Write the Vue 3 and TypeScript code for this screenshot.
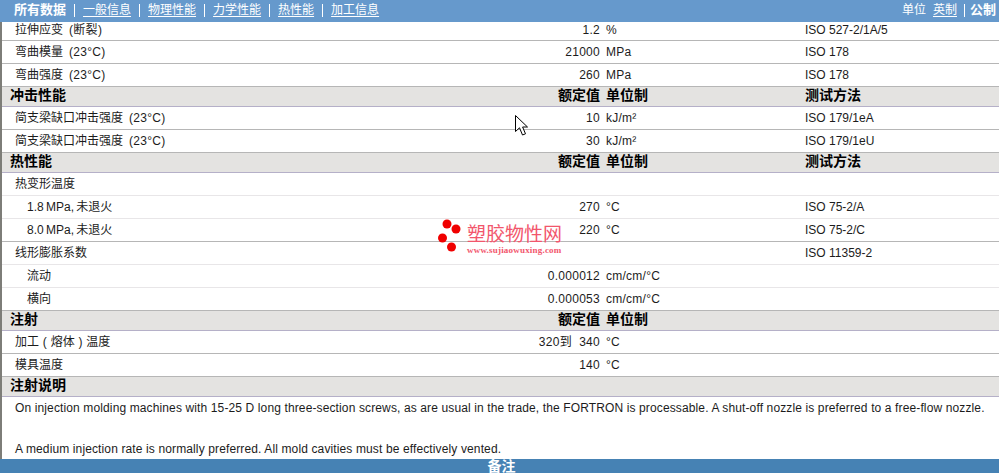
<script setup lang="ts">
interface Row {
  kind: 'head' | 'row' | 'sub' | 'first'
  label: string
  note?: string
  value?: string
  unit?: string
  method?: string
  last?: boolean
  wide?: boolean
}

const links: string[] = ['一般信息', '物理性能', '力学性能', '热性能', '加工信息']

const rows: Row[] = [
  { kind: 'first', label: '拉伸应变', note: '(断裂)', value: '1.2', unit: '%', method: 'ISO 527-2/1A/5' },
  { kind: 'row', label: '弯曲模量', note: '(23°C)', value: '21000', unit: 'MPa', method: 'ISO 178' },
  { kind: 'row', label: '弯曲强度', note: '(23°C)', value: '260', unit: 'MPa', method: 'ISO 178' },
  { kind: 'head', label: '冲击性能', value: '额定值', unit: '单位制', method: '测试方法' },
  { kind: 'row', label: '简支梁缺口冲击强度', note: '(23°C)', value: '10', unit: 'kJ/m²', method: 'ISO 179/1eA' },
  { kind: 'row', label: '简支梁缺口冲击强度', note: '(23°C)', value: '30', unit: 'kJ/m²', method: 'ISO 179/1eU' },
  { kind: 'head', label: '热性能', value: '额定值', unit: '单位制', method: '测试方法' },
  { kind: 'row', label: '热变形温度', last: false },
  { kind: 'sub', label: '1.8 MPa, 未退火', value: '270', unit: '°C', method: 'ISO 75-2/A' },
  { kind: 'sub', label: '8.0 MPa, 未退火', value: '220', unit: '°C', method: 'ISO 75-2/C', last: true },
  { kind: 'row', label: '线形膨胀系数', method: 'ISO 11359-2', last: false },
  { kind: 'sub', label: '流动', value: '0.000012', unit: 'cm/cm/°C' },
  { kind: 'sub', label: '横向', value: '0.000053', unit: 'cm/cm/°C', last: true },
  { kind: 'head', label: '注射', value: '额定值', unit: '单位制' },
  { kind: 'row', label: '加工 ( 熔体 ) 温度', value: '320到  340', unit: '°C', wide: true },
  { kind: 'row', label: '模具温度', value: '140', unit: '°C' },
  { kind: 'head', label: '注射说明' }
]

function rowClass(r: Row): Record<string, boolean> {
  const lightBorder = (r.label === '热变形温度' || r.label === '线形膨胀系数' || r.kind === 'sub') && !r.last
  return {
    head: r.kind === 'head',
    sub: r.kind === 'sub',
    first: r.kind === 'first',
    light: lightBorder,
    wide: !!r.wide
  }
}
</script>

<template>
  <div class="page">
    <header class="topbar">
      <nav class="nav">
        <strong class="current">所有数据</strong>
        <template v-for="link in links" :key="link">
          <span class="sep"></span>
          <a class="link">{{ link }}</a>
        </template>
      </nav>
      <div class="units">
        <span>单位</span>
        <a class="link">英制</a>
        <span class="sep small"></span>
        <strong class="current">公制</strong>
      </div>
    </header>

    <main class="content">
      <div v-for="(r, i) in rows" :key="i" class="row" :class="rowClass(r)">
        <div class="label">{{ r.label }}<span v-if="r.note" class="note">{{ r.note }}</span></div>
        <div class="value">{{ r.value }}</div>
        <div class="unit">{{ r.unit }}</div>
        <div class="method">{{ r.method }}</div>
      </div>
      <section class="notes">
        <p>On injection molding machines with 15-25 D long three-section screws, as are usual in the trade, the FORTRON is processable. A shut-off nozzle is preferred to a free-flow nozzle.</p>
        <p>A medium injection rate is normally preferred. All mold cavities must be effectively vented.</p>
      </section>
    </main>

    <footer class="footer">备注</footer>

    <div class="watermark">
      <svg class="dots" width="26" height="36" viewBox="0 0 26 36">
        <circle cx="9" cy="5" r="4.5" fill="#f00000" />
        <circle cx="18" cy="10" r="4.5" fill="#f00000" />
        <circle cx="4.5" cy="19" r="4.5" fill="#f00000" />
        <circle cx="13.5" cy="28" r="4.5" fill="#f00000" />
      </svg>
      <div class="brand">
        <div class="brand-name">塑胶物性网</div>
        <div class="brand-url">www.sujiaowuxing.com</div>
      </div>
    </div>

    <svg class="cursor" width="14" height="22" viewBox="0 0 14 22">
      <path d="M0.5 0.5 V16.5 L4.5 12.8 L7.5 20 L10.5 18.8 L7.6 12 H12.5 Z" fill="#fff" stroke="#000" stroke-width="1" stroke-linejoin="miter" />
    </svg>
  </div>
</template>

<style>
html, body { margin: 0; padding: 0; background: #fff; overflow: hidden; }
</style>

<style scoped>
.page {
  position: relative;
  width: 999px;
  height: 473px;
  overflow: hidden;
  display: flex;
  flex-direction: column;
  background: #fff;
  color: #1c1c1c;
  font: 12px/16px "Liberation Sans", "Noto Sans CJK SC", sans-serif;
}
.topbar {
  height: 22px;
  flex: none;
  background: #6699cc;
  color: #fff;
  display: flex;
  justify-content: space-between;
  align-items: center;
  padding: 0 3px 2px 14px;
  box-sizing: border-box;
}
.nav, .units { display: flex; align-items: center; }
.nav { gap: 8px; }
.units { gap: 7px; }
.current { font-size: 13px; font-weight: 700; }
.link { text-decoration: underline; text-underline-offset: 2px; }
.sep {
  width: 1px;
  height: 13px;
  background: #fff;
}
.units .sep.small { margin-right: -2px; }
.content {
  flex: 1;
  min-height: 0;
  border-left: 2px solid #7d7d78;
  display: flex;
  flex-direction: column;
}
.row {
  flex: none;
  height: 23px;
  box-sizing: border-box;
  display: grid;
  grid-template-columns: 398px 200px 205px 1fr;
  align-items: center;
  border-bottom: 1px solid #b6b6b6;
}
.row.first { height: 19px; padding-bottom: 4px; }
.row.light { border-bottom-color: #e8e6e8; }
.row.head {
  height: 20px;
  background: #e4e3e1;
  border-bottom-color: #b5b0c8;
  font-size: 14px;
  font-weight: 700;
  color: #000;
  padding-bottom: 3px;
}
.label { padding-left: 13px; white-space: nowrap; }
.row.head .label { padding-left: 8px; }
.row.sub .label { padding-left: 25px; word-spacing: -1px; }
.row.wide .label { word-spacing: 0.5px; }
.note { margin-left: 6px; letter-spacing: 0.3px; }
.value { text-align: right; white-space: pre; letter-spacing: 0.28px; }
.unit { padding-left: 6px; letter-spacing: 0.25px; }
.row.head .value, .row.head .unit { letter-spacing: 0; }
.notes {
  flex: 1;
  min-height: 0;
  padding: 3px 13px 0;
  letter-spacing: 0.125px;
}
.notes p { margin: 0 0 25px; white-space: nowrap; }
.footer {
  height: 14px;
  flex: none;
  background: #4682b4;
  color: #fff;
  font-size: 14px;
  font-weight: 700;
  line-height: 14px;
  text-align: center;
  overflow: hidden;
  padding-left: 4px;
}
.watermark {
  position: absolute;
  left: 438px;
  top: 219px;
  display: flex;
  gap: 3px;
  pointer-events: none;
}
.brand { padding-top: 7px; }
.brand-name {
  font-size: 19px;
  line-height: 18px;
  color: #f2566c;
  white-space: nowrap;
}
.brand-url {
  font: 700 9px/10px "Liberation Serif", serif;
  color: #f2566c;
  white-space: nowrap;
  margin-top: 1px;
  letter-spacing: 0.2px;
}
.cursor {
  position: absolute;
  left: 515px;
  top: 115px;
}
</style>
